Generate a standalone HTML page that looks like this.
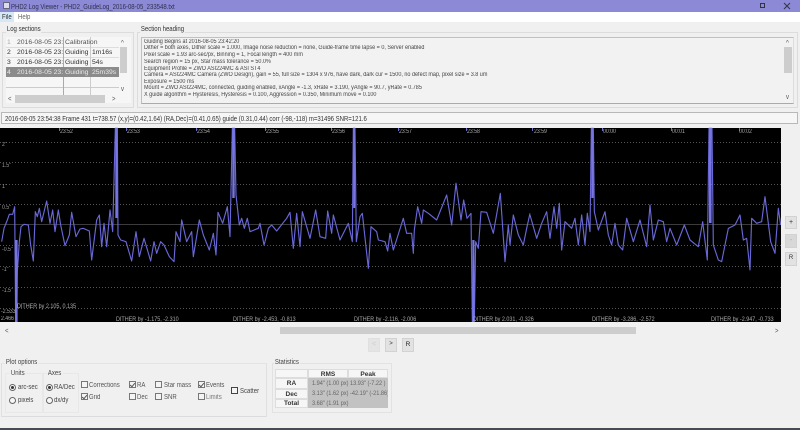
<!DOCTYPE html>
<html style="background:#f0f0f0"><head><meta charset="utf-8">
<style>
html,body{margin:0;padding:0}
body{width:800px;height:430px;overflow:hidden;background:#f0f0f0;position:relative;font-family:"Liberation Sans",sans-serif;font-size:7px;color:#333}
#w{position:absolute;left:0;top:0;width:800px;height:430px;filter:blur(.35px);overflow:hidden}
div{position:absolute;box-sizing:border-box}
.t{white-space:nowrap;line-height:9px;transform:scaleX(.86);transform-origin:0 0}
.g{border:1px solid #dcdcdc}
.cb{width:7px;height:7px;border:1px solid #777;background:#f4f4f4}
.cb.on:after{content:"";position:absolute;left:1px;top:0;width:2px;height:4px;border:solid #555;border-width:0 1px 1px 0;transform:rotate(40deg)}
.rb{width:7px;height:7px;border:1px solid #666;border-radius:50%;background:#f8f8f8}
.rb.on:after{content:"";position:absolute;left:1px;top:1px;width:3px;height:3px;border-radius:50%;background:#333}
.btn{background:#e2e2e2;border:1px solid #d2d2d2;text-align:center;line-height:11px}
.row{left:6px;width:113px;height:10px;line-height:10px;white-space:nowrap;font-size:6.8px}
.row span{position:absolute;top:0;overflow:hidden}
.hd{left:144px;width:640px;font-size:6px;line-height:6.8px;white-space:nowrap;color:#444;transform:scaleX(.91);transform-origin:0 0}
.c{position:absolute;text-align:center;font-weight:bold;font-size:6.5px;line-height:11px;color:#333;background:#f6f6f6;border:1px solid #ddd;box-sizing:border-box}
.tk{top:127.5px;color:#aaa;font-size:6px}
.ax{color:#999;font-size:6px;left:2px}
.dt{color:#aaa;font-size:6.3px;top:315px}
.st{color:#666;font-size:6.5px}
</style></head><body><div id="w">

<!-- title bar -->
<div style="left:0;top:0;width:800px;height:12px;background:#8c8ad6"></div>
<div style="left:3px;top:2px;width:7px;height:7px;background:#d8dcec;border:1px solid #667"></div>
<div class="t" style="left:11px;top:1.5px;color:#303050;font-size:7.5px;transform:scaleX(.8)">PHD2 Log Viewer - PHD2_GuideLog_2016-08-05_233548.txt</div>
<div style="left:760px;top:3px;width:5px;height:5px;border:1px solid #334"></div>
<svg style="position:absolute;left:783px;top:2px" width="8" height="8"><path d="M1 1L7 7M7 1L1 7" stroke="#334" stroke-width="1"/></svg>

<!-- menu -->
<div style="left:0;top:12px;width:800px;height:10px;background:#fff"></div>
<div style="left:0;top:12px;width:14px;height:10px;background:#d5e8f5"></div>
<div class="t" style="left:2px;top:13px;color:#333">File</div>
<div class="t" style="left:18px;top:13px;color:#666">Help</div>

<!-- log sections -->
<div class="g" style="left:2px;top:32px;width:132px;height:76px"></div>
<div class="t" style="left:6px;top:24.5px;background:#f0f0f0;padding:0 1px">Log sections</div>
<div style="left:6px;top:37px;width:125px;height:66px;background:#f6f6f6"></div>
<div style="left:6px;top:47px;width:113px;height:1px;background:#ddd"></div>
<div style="left:6px;top:57px;width:113px;height:1px;background:#ddd"></div>
<div style="left:6px;top:87px;width:113px;height:1px;background:#ccc"></div>
<div style="left:63px;top:37px;width:1px;height:58px;background:#aaa"></div>
<div style="left:90px;top:37px;width:1px;height:58px;background:#ccc"></div>
<div style="left:6px;top:67px;width:113px;height:10px;background:#8b8b8b"></div>
<div class="row" style="top:38px;color:#555"><span style="left:1px;color:#aaa">1</span><span style="left:11px;width:46px">2016-08-05 23:31</span><span style="left:59px">Calibration</span></div>
<div class="row" style="top:48px"><span style="left:1px">2</span><span style="left:11px;width:46px">2016-08-05 23:35</span><span style="left:59px">Guiding</span><span style="left:86px">1m16s</span></div>
<div class="row" style="top:58px"><span style="left:1px">3</span><span style="left:11px;width:46px">2016-08-05 23:41</span><span style="left:59px">Guiding</span><span style="left:86px">54s</span></div>
<div class="row" style="top:68px;color:#e8e8e8"><span style="left:1px">4</span><span style="left:11px;width:46px">2016-08-05 23:34</span><span style="left:59px">Guiding</span><span style="left:86px">25m39s</span></div>
<div style="left:120px;top:47px;width:7px;height:26px;background:#cdcdcd"></div>
<div class="t" style="left:121px;top:39px;color:#555">^</div>
<div class="t" style="left:121px;top:85px;color:#555">v</div>
<div style="left:15px;top:95px;width:90px;height:8px;background:#cdcdcd"></div>
<div class="t" style="left:8px;top:94.5px;color:#555">&lt;</div>
<div class="t" style="left:112px;top:94.5px;color:#555">&gt;</div>

<!-- section heading -->
<div class="g" style="left:137px;top:32px;width:661px;height:76px"></div>
<div class="t" style="left:140px;top:24.5px;background:#f0f0f0;padding:0 1px">Section heading</div>
<div style="left:141px;top:37px;width:653px;height:67px;background:#f2f2f2;border:1px solid #c0c0c0;border-right-color:#ddd;border-bottom-color:#aaa"></div>
<div class="hd" style="top:38.5px">Guiding Begins at 2016-08-05 23:42:20</div>
<div class="hd" style="top:45px">Dither = both axes, Dither scale = 1.000, Image noise reduction = none, Guide-frame time lapse = 0, Server enabled</div>
<div class="hd" style="top:52px">Pixel scale = 1.93 arc-sec/px, Binning = 1, Focal length = 400 mm</div>
<div class="hd" style="top:58.5px">Search region = 15 px, Star mass tolerance = 50.0%</div>
<div class="hd" style="top:65.5px">Equipment Profile = ZWO ASI224MC &amp; ASI ST4</div>
<div class="hd" style="top:72px">Camera = ASI224MC Camera (ZWO Design), gain = 55, full size = 1304 x 976, have dark, dark cur = 1500, no defect map, pixel size = 3.8 um</div>
<div class="hd" style="top:78.5px">Exposure = 1500 ms</div>
<div class="hd" style="top:85px">Mount = ZWO ASI224MC, connected, guiding enabled, xAngle = -1.3, xRate = 3.190, yAngle = 90.7, yRate = 0.785</div>
<div class="hd" style="top:91.5px">X guide algorithm = Hysteresis, Hysteresis = 0.100, Aggression = 0.350, Minimum move = 0.100</div>
<div style="left:784px;top:47px;width:8px;height:26px;background:#cdcdcd"></div>
<div class="t" style="left:786px;top:39px;color:#555">^</div>
<div class="t" style="left:786px;top:93px;color:#555">v</div>

<!-- status line -->
<div style="left:1px;top:112px;width:797px;height:12px;background:#f6f6f6;border:1px solid #b8b8b8"></div>
<div class="t" style="left:5px;top:113.5px;color:#333;font-size:7.4px;transform:scaleX(.81)">2016-08-05 23:54:38 Frame 431 t=738.57 (x,y)=(0.42,1.64) (RA,Dec)=(0.41,0.65) guide (0.31,0.44) corr (-98,-118) m=31496 SNR=121.6</div>

<!-- plot -->
<div style="left:0;top:128px;width:781px;height:194px;background:#000"></div>
<svg style="position:absolute;left:0;top:125px" width="781" height="197" viewBox="0 125 781 197">
<g stroke="#555" stroke-width="1" stroke-dasharray="1 2" shape-rendering="crispEdges">
<path d="M0 142.5H781M0 162.5H781M0 184.5H781M0 204.5H781M0 245.5H781M0 266.5H781M0 287.5H781M0 308.5H781"/>
</g>
<path d="M0 224.5H781" stroke="#3c3c3c" shape-rendering="crispEdges"/>
<g stroke="#7070c8" stroke-width="1" shape-rendering="crispEdges">
<path d="M59.5 128V131M126.5 128V131M196.5 128V131M265.5 128V131M331.5 128V131M398.5 128V131M466.5 128V131M532.5 128V131M602.5 128V131M671.5 128V131M739.5 128V131"/>
</g>
<g fill="none" stroke="#6a68d8" stroke-width="3.4" stroke-linejoin="round" transform="translate(0,125) scale(.33333)">
<polyline points="5,350 12,310 22,285 28,268 38,268 44,245 47,590 50,590 52,440 58,350 63,305 72,298 85,300 92,360 100,408 106,260 112,275 118,250 125,290 140,228 150,295 158,255 165,320 175,255 182,300 195,362 208,330 215,262 228,335 240,312 250,310 268,318 275,405 290,285 298,270 305,365 312,295 320,365 330,255 338,320 346,10 352,10 354,330 362,345 378,350 395,408 408,320 418,395 432,340 452,408 462,350 470,385 482,350 492,360 508,395 522,410 528,320 540,350 545,285 560,350 575,320 580,395 598,285 610,330 628,375 640,325 648,390 654,262 668,295 682,245 690,335 697,10 704,10 708,210 718,300 725,280 733,310 742,280 750,320 775,310 780,295 792,360 795,350"/>
<polyline transform="translate(795,0)" points="0,350 10,310 20,300 35,318 65,280 75,262 85,370 95,265 105,365 112,260 135,340 152,255 165,335 182,340 188,258 200,325 205,270 225,345 250,295 262,350 265,10 270,10 274,350 285,275 292,265 310,430 318,305 335,320 340,345 360,350 368,378 375,325 385,375 415,280 425,325 440,325 445,385 448,315 458,245 470,295 475,255 490,265 515,285 545,210 560,300 573,175 588,285 596,225 606,280 618,265 622,590 628,590 632,350 640,370 648,260 665,262 685,325 706,205 720,410 730,300 735,360 745,270 760,330 775,360 785,310 795,265"/>
<polyline transform="translate(1590,0)" points="0,270 20,340 35,295 50,260 60,340 72,245 80,310 88,235 95,375 105,290 125,310 135,280 145,360 155,270 165,360 172,265 180,320 184,10 190,10 193,260 205,315 225,260 235,330 245,360 255,295 265,360 278,375 290,280 310,350 330,285 350,365 360,240 370,345 385,285 400,290 410,350 420,310 440,360 463,300 480,345 505,365 518,290 532,405 537,10 546,10 550,360 565,405 575,410 595,310 615,300 630,270 640,345 650,340 660,435 665,280 680,295 695,290 705,215 715,295 722,350 735,385 745,250 752,300"/>
</g>
<g fill="#7775e0">
<rect x="115.3" y="128" width="2.4" height="90"/>
<rect x="232.3" y="128" width="2.4" height="70"/>
<rect x="353.2" y="128" width="2" height="80"/>
<rect x="591.3" y="128" width="2.2" height="70"/>
<rect x="709" y="128" width="2.6" height="95"/>
<rect x="15" y="240" width="2.6" height="82"/>
<rect x="472.3" y="240" width="2.2" height="82"/>
</g>
</svg>
<div class="t tk" style="left:60px">23:52</div>
<div class="t tk" style="left:127px">23:53</div>
<div class="t tk" style="left:197px">23:54</div>
<div class="t tk" style="left:266px">23:55</div>
<div class="t tk" style="left:332px">23:56</div>
<div class="t tk" style="left:399px">23:57</div>
<div class="t tk" style="left:467px">23:58</div>
<div class="t tk" style="left:534px">23:59</div>
<div class="t tk" style="left:603px">00:00</div>
<div class="t tk" style="left:672px">00:01</div>
<div class="t tk" style="left:739px">00:02</div>

<div class="t ax" style="top:140.5px">2"</div>
<div class="t ax" style="top:161.5px">1.5"</div>
<div class="t ax" style="top:182.5px">1"</div>
<div class="t ax" style="top:203.5px">0.5"</div>
<div class="t ax" style="top:245.5px">-0.5"</div>
<div class="t ax" style="top:265.5px">-1"</div>
<div class="t ax" style="top:286.5px">-1.5"</div>
<div class="t" style="left:1px;top:307.5px;color:#aaa;font-size:6px">-2.533</div>
<div class="t" style="left:1px;top:314.5px;color:#aaa;font-size:6px">2.466</div>

<div class="t" style="left:17px;top:301.5px;color:#aaa;font-size:6.3px">DITHER by 2.105, 0.135</div>
<div class="t dt" style="left:116px">DITHER by -1.175, -2.310</div>
<div class="t dt" style="left:233px">DITHER by -2.453, -0.813</div>
<div class="t dt" style="left:354px">DITHER by -2.116, -2.006</div>
<div class="t dt" style="left:473px">DITHER by 2.031, -0.326</div>
<div class="t dt" style="left:592px">DITHER by -3.286, -2.572</div>
<div class="t dt" style="left:711px">DITHER by -2.947, -0.733</div>

<!-- plot scrollbar -->
<div style="left:280px;top:327px;width:356px;height:7px;background:#cdcdcd"></div>
<div class="t" style="left:4.5px;top:326.5px;color:#555">&lt;</div>
<div class="t" style="left:775px;top:326.5px;color:#555">&gt;</div>

<!-- side buttons -->
<div class="btn" style="left:785px;top:216px;width:12px;height:13px;color:#333">+</div>
<div class="btn" style="left:785px;top:234px;width:12px;height:14px;color:#aaa;background:#d8d8d8">-</div>
<div class="btn" style="left:785px;top:252px;width:12px;height:14px;color:#333;font-size:6px">R</div>

<!-- nav buttons -->
<div class="btn" style="left:368px;top:338px;width:12px;height:14px;color:#ccc;background:#e4e4e4;border-color:#e0e0e0">&lt;</div>
<div class="btn" style="left:385px;top:338px;width:12px;height:14px;font-size:6px">&gt;</div>
<div class="btn" style="left:402px;top:338px;width:12px;height:14px;font-size:6.5px;color:#222">R</div>

<!-- plot options -->
<div style="left:1px;top:363px;width:266px;height:1px;background:#e4e4e4"></div>
<div style="left:1px;top:416px;width:266px;height:1px;background:#dcdcdc"></div>
<div style="left:1px;top:363px;width:1px;height:54px;background:#e0e0e0"></div>
<div style="left:266px;top:363px;width:1px;height:54px;background:#e0e0e0"></div>
<div class="t" style="left:5px;top:358px;background:#f0f0f0;padding:0 1px;color:#444">Plot options</div>

<div style="left:5px;top:373px;width:38px;height:40px;border:1px solid #e8e8e8"></div>
<div class="t" style="left:10px;top:369px;background:#f0f0f0;padding:0 1px;color:#444">Units</div>
<div class="rb on" style="left:9px;top:383.5px"></div><div class="t" style="left:18px;top:383px;color:#444">arc-sec</div>
<div class="rb" style="left:9px;top:396.5px"></div><div class="t" style="left:18px;top:396px;color:#444">pixels</div>

<div style="left:43px;top:373px;width:36px;height:40px;border:1px solid #e8e8e8"></div>
<div class="t" style="left:47px;top:369px;background:#f0f0f0;padding:0 1px;color:#444">Axes</div>
<div class="rb on" style="left:46px;top:383.5px"></div><div class="t" style="left:54px;top:383px;color:#444">RA/Dec</div>
<div class="rb" style="left:46px;top:396.5px"></div><div class="t" style="left:54px;top:396px;color:#444">dx/dy</div>

<div class="cb" style="left:81px;top:381px"></div><div class="t" style="left:89px;top:380.5px;color:#555">Corrections</div>
<div class="cb on" style="left:81px;top:393px"></div><div class="t" style="left:89px;top:392.5px;color:#555">Grid</div>
<div class="cb on" style="left:129px;top:381px"></div><div class="t" style="left:137px;top:380.5px;color:#555">RA</div>
<div class="cb" style="left:129px;top:393px"></div><div class="t" style="left:137px;top:392.5px;color:#555">Dec</div>
<div class="cb" style="left:155px;top:381px"></div><div class="t" style="left:164px;top:380.5px;color:#555">Star mass</div>
<div class="cb" style="left:155px;top:393px"></div><div class="t" style="left:164px;top:392.5px;color:#555">SNR</div>
<div class="cb on" style="left:198px;top:381px"></div><div class="t" style="left:206px;top:380.5px;color:#555">Events</div>
<div class="cb" style="left:198px;top:393px"></div><div class="t" style="left:206px;top:392.5px;color:#777">Limits</div>
<div class="cb" style="left:231px;top:387px;width:7px;height:7px;border-color:#444"></div><div class="t" style="left:240px;top:386.5px;color:#444">Scatter</div>

<!-- statistics -->
<div style="left:272px;top:363px;width:120px;height:50px;border:1px solid #e2e2e2"></div>
<div class="t" style="left:274px;top:358px;background:#f0f0f0;padding:0 1px;color:#444">Statistics</div>
<div style="left:308px;top:378px;width:80px;height:30px;background:#c2c2c2"></div>
<div class="c" style="left:275px;top:369px;width:33px;height:9px"></div>
<div class="c" style="left:308px;top:369px;width:40px;height:9px;line-height:9px">RMS</div>
<div class="c" style="left:348px;top:369px;width:40px;height:9px;line-height:9px">Peak</div>
<div class="c" style="left:275px;top:378px;width:33px;height:11px;line-height:9px">RA</div>
<div class="c" style="left:275px;top:389px;width:33px;height:10px;line-height:9px">Dec</div>
<div class="c" style="left:275px;top:399px;width:33px;height:9px;line-height:8px">Total</div>
<div class="t st" style="left:311.5px;top:379px">1.94" (1.00 px)</div>
<div class="t st" style="left:349.5px;top:379px;width:44px;overflow:hidden">13.93" (-7.22 )</div>
<div class="t st" style="left:311.5px;top:389px">3.13" (1.62 px)</div>
<div class="t st" style="left:349.5px;top:389px;width:44px;overflow:hidden">-42.19" (-21.86)</div>
<div class="t st" style="left:311.5px;top:399px">3.68" (1.91 px)</div>

<!-- bottom strip -->
<div style="left:0;top:428px;width:800px;height:2px;background:#454a55"></div>
</div></body></html>
